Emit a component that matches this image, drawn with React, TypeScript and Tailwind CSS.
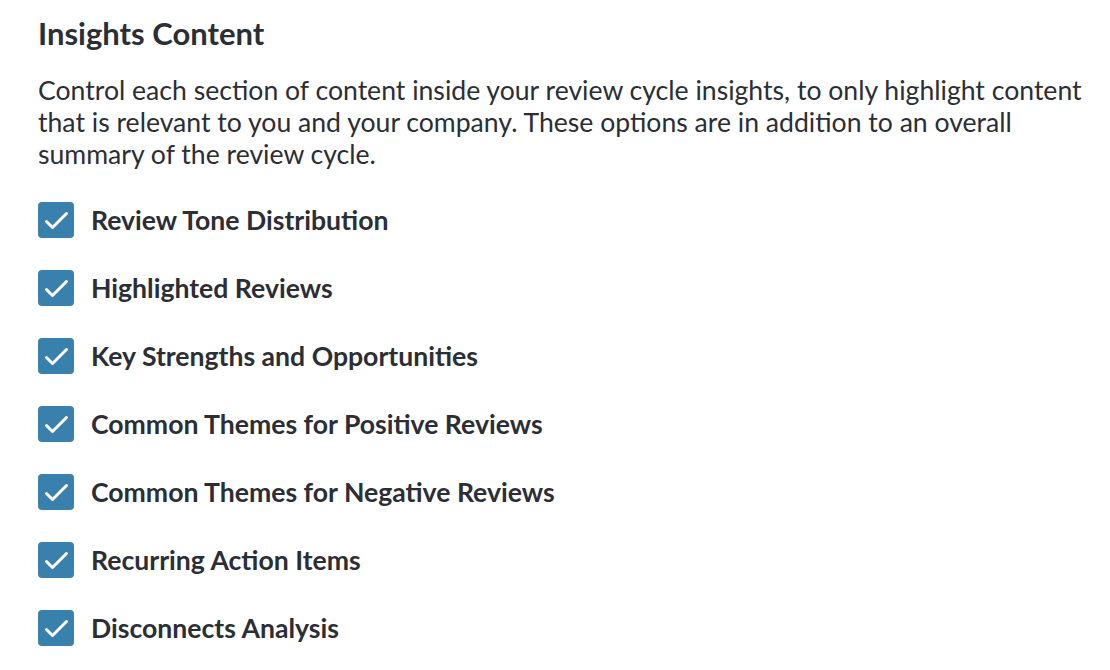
const items = [
  "Review Tone Distribution",
  "Highlighted Reviews",
  "Key Strengths and Opportunities",
  "Common Themes for Positive Reviews",
  "Common Themes for Negative Reviews",
  "Recurring Action Items",
  "Disconnects Analysis",
];

function CheckIcon() {
  return (
    <svg viewBox="0 0 36 36" width="36" height="36" fill="none" stroke="white" strokeWidth="3" strokeLinecap="round" strokeLinejoin="round">
      <path d="M8.5 19.5L14.5 25.5L28.5 11.5" />
    </svg>
  );
}

export default function App() {
  return (
    <div className="min-h-screen bg-white px-[38px] pt-[13px] text-[#2b2e35]" style={{ fontFamily: "Lato, 'Liberation Sans', sans-serif" }}>
      <h1 className="text-[31px] font-bold leading-[40px]">Insights Content</h1>
      <p className="mt-[21px] w-[1060px] text-[26.6px] leading-[32px]">
        Control each section of content inside your review cycle insights, to only highlight content that is relevant to you and your company. These options are in addition to an overall summary of the review cycle.
      </p>
      <div className="mt-[32px] flex flex-col gap-[32px]">
        {items.map((label) => (
          <label key={label} className="flex items-center gap-[17px]">
            <span className="flex h-[36px] w-[36px] shrink-0 items-center justify-center rounded-[4px] bg-[#3a80ad]">
              <CheckIcon />
            </span>
            <span className="text-[26.6px] font-bold leading-[36px]">{label}</span>
          </label>
        ))}
      </div>
    </div>
  );
}
